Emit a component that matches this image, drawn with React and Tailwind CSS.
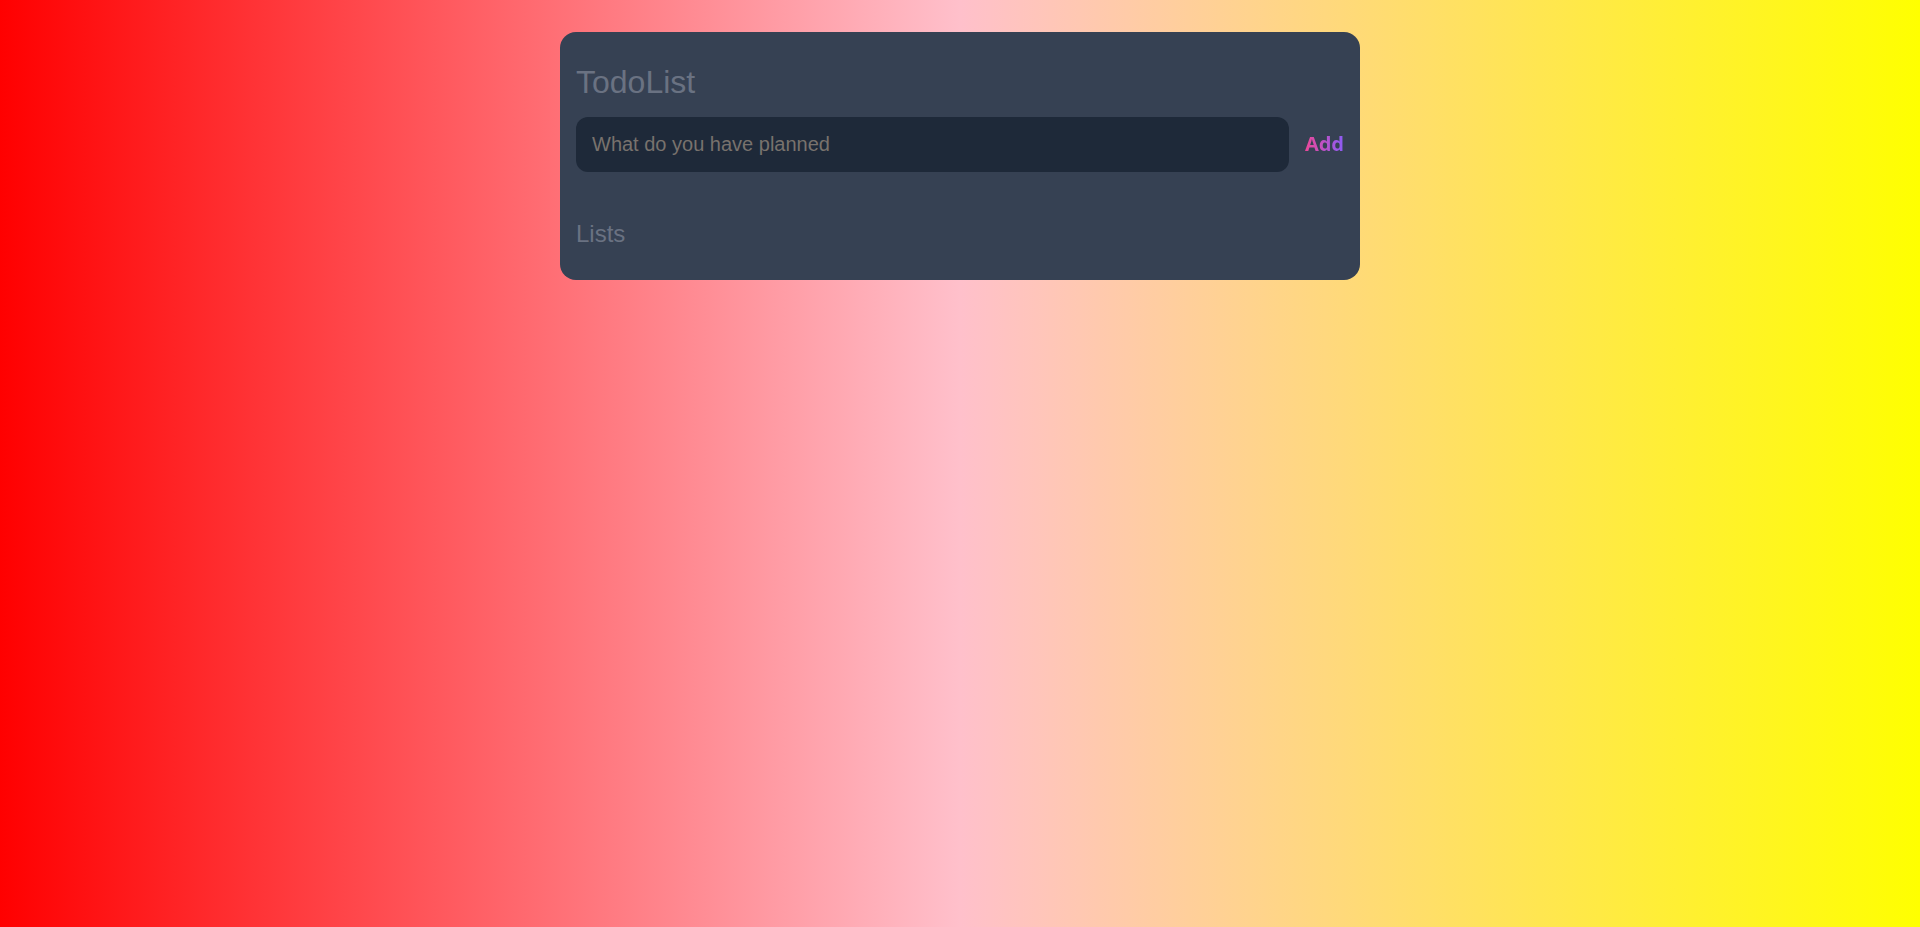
import React, { useState } from "react";

export default function App() {
  const [task, setTask] = useState("");
  const [todos, setTodos] = useState([]);

  const addTodo = () => {
    if (!task.trim()) return;
    setTodos([...todos, { id: Date.now(), text: task }]);
    setTask("");
  };

  return (
    <div className="min-h-screen w-full bg-[linear-gradient(to_right,#ff0000,#ffc0cb,#ffff00)] pt-8 font-['Liberation_Sans',Arial,sans-serif]">
      <div className="mx-auto w-[800px] rounded-2xl bg-gray-700 px-4 pt-4 pb-[30px]">
        <h1 className="mt-[14px] text-[32px] leading-[40px] text-gray-500">
          TodoList
        </h1>
        <div className="mt-[15px] flex items-center gap-4">
          <input
            type="text"
            value={task}
            onChange={(e) => setTask(e.target.value)}
            placeholder="What do you have planned"
            className="h-[55px] flex-1 rounded-xl bg-gray-800 px-4 text-xl text-gray-300 outline-none placeholder:text-[#78726d]"
          />
          <button
            onClick={addTodo}
            className="mb-[2px] bg-[linear-gradient(to_right,#ec4899,#8b5cf6)] bg-clip-text text-xl font-bold text-transparent font-['Noto_Sans',sans-serif]"
          >
            Add
          </button>
        </div>
        <h2 className="mt-[46px] text-2xl leading-8 text-gray-500">Lists</h2>
        {todos.map((t) => (
          <div key={t.id} className="mt-2 text-gray-300">
            {t.text}
          </div>
        ))}
      </div>
    </div>
  );
}
